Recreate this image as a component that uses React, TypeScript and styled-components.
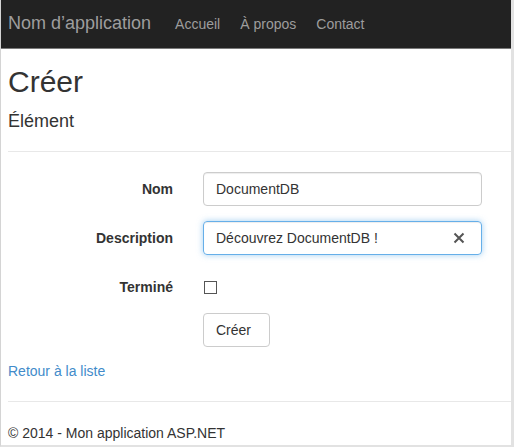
import styled, { createGlobalStyle } from 'styled-components';

const GlobalStyle = createGlobalStyle`
  html, body {
    margin: 0;
    padding: 0;
    background: #fff;
  }
  body {
    font-family: "Liberation Sans", Arial, sans-serif;
    font-size: 14px;
    line-height: 20px;
    color: #333;
  }
  * {
    box-sizing: border-box;
  }
`;

const Frame = styled.div`
  width: 514px;
  height: 447px;
  display: flex;
  flex-direction: column;
  border-left: 1px solid #d4d4d4;
  border-right: 3px solid #e2e2e2;
  border-bottom: 2px solid #e2e2e2;
  overflow: hidden;
`;

const Navbar = styled.nav`
  flex-shrink: 0;
  height: 49px;
  margin-left: -1px;
  margin-right: -3px;
  background: #222;
  border-bottom: 1px solid #7a7a7a;
  display: flex;
  align-items: flex-start;
  padding: 13px 0 0 8px;
`;

const Brand = styled.a`
  font-size: 18px;
  line-height: 20px;
  color: #9d9d9d;
  text-decoration: none;
  margin-right: 14px;
`;

const NavLink = styled.a`
  font-size: 14px;
  line-height: 20px;
  color: #9d9d9d;
  text-decoration: none;
  padding: 0 10px;
  margin-top: 1px;
`;

const Body = styled.div`
  padding: 0 0 0 7px;
  display: flex;
  flex-direction: column;
`;

const Title = styled.h2`
  font-size: 30px;
  font-weight: 500;
  line-height: 33px;
  margin: 16px 0 0;
`;

const SubTitle = styled.h4`
  font-size: 18px;
  font-weight: 500;
  line-height: 20px;
  margin: 13px 0 0;
`;

const Rule = styled.hr`
  border: 0;
  border-top: 1px solid #e8e8e8;
  margin: 20px 0;
  height: 0;
`;

const Form = styled.form`
  display: grid;
  grid-template-columns: 165px 279px;
  column-gap: 30px;
  row-gap: 15px;
  align-items: start;
`;

const Label = styled.label`
  text-align: right;
  font-weight: bold;
  padding-top: 7px;
  line-height: 20px;
`;

const InputBox = styled.div<{ $focused?: boolean }>`
  height: 34px;
  border: 1px solid ${(p) => (p.$focused ? '#66afe9' : '#ccc')};
  border-radius: 4px;
  box-shadow: ${(p) =>
    p.$focused
      ? 'inset 0 1px 1px rgba(0,0,0,.075), 0 0 6px rgba(102,175,233,.6)'
      : 'inset 0 1px 1px rgba(0,0,0,.075)'};
  display: flex;
  align-items: center;
  padding: 0 12px;
  font-size: 14px;
  color: #333;
`;

const InputText = styled.span`
  flex: 1;
`;

const ClearIcon = styled.svg`
  width: 12px;
  height: 12px;
  margin-right: 4px;
`;

const CheckRow = styled.div`
  height: 28px;
  padding-top: 11px;
`;

const Check = styled.span`
  display: block;
  width: 13px;
  height: 13px;
  margin-left: 1px;
  border: 1px solid #555;
  background: #fff;
`;

const Button = styled.button`
  justify-self: start;
  height: 34px;
  width: 67px;
  padding: 0 0 0 12px;
  text-align: left;
  font-family: inherit;
  font-size: 14px;
  color: #333;
  background: #fff;
  border: 1px solid #ccc;
  border-radius: 4px;
`;

const Back = styled.a`
  display: block;
  margin-top: 14px;
  color: #428bca;
  text-decoration: none;
  line-height: 20px;
`;

const Footer = styled.footer`
  line-height: 20px;
  margin-top: 1px;
`;

const Spacer = styled.div``;

export default function App() {
  return (
    <>
      <GlobalStyle />
      <Frame>
        <Navbar>
          <Brand href="#">Nom d’application</Brand>
          <NavLink href="#">Accueil</NavLink>
          <NavLink href="#">À propos</NavLink>
          <NavLink href="#">Contact</NavLink>
        </Navbar>
        <Body>
          <Title>Créer</Title>
          <SubTitle>Élément</SubTitle>
          <Rule />
          <Form>
            <Label>Nom</Label>
            <InputBox>
              <InputText>DocumentDB</InputText>
            </InputBox>
            <Label>Description</Label>
            <InputBox $focused>
              <InputText>Découvrez DocumentDB !</InputText>
              <ClearIcon viewBox="0 0 12 12">
                <path d="M1.5 1.5 L10.5 10.5 M10.5 1.5 L1.5 10.5" stroke="#555" strokeWidth="2" />
              </ClearIcon>
            </InputBox>
            <Label>Terminé</Label>
            <CheckRow>
              <Check />
            </CheckRow>
            <Spacer />
            <Button type="button">Créer</Button>
          </Form>
          <Back href="#">Retour à la liste</Back>
          <Rule />
          <Footer>© 2014 - Mon application ASP.NET</Footer>
        </Body>
      </Frame>
    </>
  );
}
